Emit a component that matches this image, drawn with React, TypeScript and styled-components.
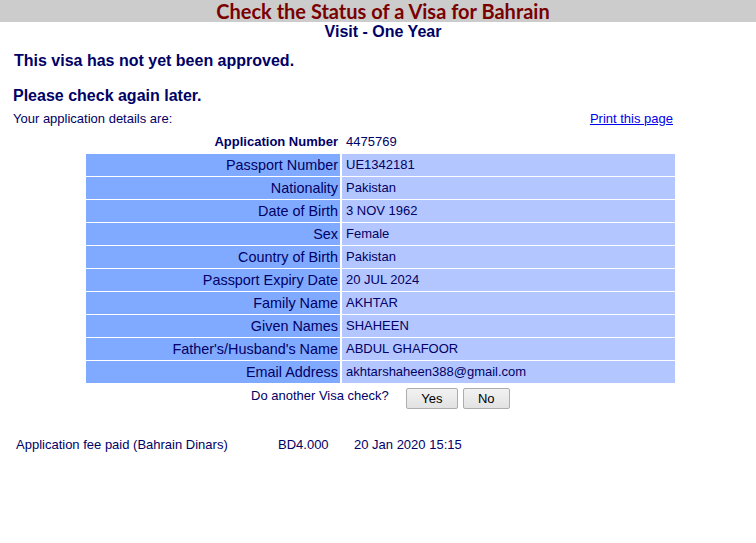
import React from "react";
import styled, { createGlobalStyle } from "styled-components";

const Global = createGlobalStyle`
  html, body { margin: 0; padding: 0; background: #fff; }
  body { font-family: "Liberation Sans", Arial, sans-serif; color: #000066; }
`;

const Page = styled.div`
  width: 756px;
  display: flex;
  flex-direction: column;
`;

const TitleBar = styled.div`
  height: 22px;
  background: #cccccc;
  display: flex;
  align-items: center;
  justify-content: center;
  padding-left: 10px;
  font-family: "Lato", "DejaVu Sans", sans-serif;
  font-weight: 700;
  font-size: 20px;
  color: #7a0000;
  line-height: 22px;
`;

const SubTitle = styled.div`
  text-align: center;
  padding-left: 10px;
  font-weight: 700;
  font-size: 16px;
  line-height: 18px;
  margin-top: 1px;
  color: #000066;
`;

const Message = styled.div<{ $top: number; $left: number }>`
  font-weight: 700;
  font-size: 16px;
  line-height: 18px;
  margin-top: ${(p) => p.$top}px;
  padding-left: ${(p) => p.$left}px;
  color: #000066;
`;

const IntroRow = styled.div`
  display: flex;
  justify-content: space-between;
  align-items: baseline;
  padding: 0 83px 0 13px;
  margin-top: 6px;
  font-size: 13px;
  line-height: 15px;
`;

const PrintLink = styled.a`
  color: #0000ee;
  text-decoration: underline;
  font-size: 13px;
  cursor: pointer;
`;

const Details = styled.div`
  margin: 5px 0 0 86px;
  width: 589px;
  display: grid;
  grid-template-columns: 254px 1fr;
  gap: 1px 2px;
  font-size: 13px;
`;

const Label = styled.div<{ $plain?: boolean }>`
  height: 22px;
  line-height: 22px;
  text-align: right;
  padding-right: 2px;
  background: ${(p) => (p.$plain ? "transparent" : "#80aaff")};
  font-weight: ${(p) => (p.$plain ? 700 : 400)};
  font-size: ${(p) => (p.$plain ? "13px" : "14.4px")};
  color: #000066;
  white-space: nowrap;
`;

const Value = styled.div<{ $plain?: boolean }>`
  height: 22px;
  line-height: 22px;
  padding-left: 4px;
  background: ${(p) => (p.$plain ? "transparent" : "#b4c6ff")};
  color: #000066;
  white-space: nowrap;
`;

const AgainRow = styled.div`
  display: flex;
  align-items: center;
  margin: 5px 0 0 251px;
  font-size: 13px;
  color: #000066;
`;

const AgainText = styled.span`
  margin-top: -6px;
  margin-right: 17px;
`;

const Button = styled.button<{ $w: number }>`
  width: ${(p) => p.$w}px;
  height: 21px;
  margin-right: 5px;
  padding: 0;
  border: 1px solid #adadad;
  border-radius: 2px;
  background: linear-gradient(#f2f2f2, #e2e2e2);
  font-family: "Liberation Sans", Arial, sans-serif;
  font-size: 13px;
  color: #000;
`;

const FeeRow = styled.div`
  display: grid;
  grid-template-columns: 262px 76px auto;
  margin: 28px 0 0 16px;
  font-size: 13px;
  line-height: 15px;
  color: #000066;
`;

const rows: [string, string][] = [
  ["Passport Number", "UE1342181"],
  ["Nationality", "Pakistan"],
  ["Date of Birth", "3 NOV 1962"],
  ["Sex", "Female"],
  ["Country of Birth", "Pakistan"],
  ["Passport Expiry Date", "20 JUL 2024"],
  ["Family Name", "AKHTAR"],
  ["Given Names", "SHAHEEN"],
  ["Father's/Husband's Name", "ABDUL GHAFOOR"],
  ["Email Address", "akhtarshaheen388@gmail.com"],
];

export default function App() {
  return (
    <Page>
      <Global />
      <TitleBar>Check the Status of a Visa for Bahrain</TitleBar>
      <SubTitle>Visit - One Year</SubTitle>
      <Message $top={11} $left={14}>This visa has not yet been approved.</Message>
      <Message $top={17} $left={13}>Please check again later.</Message>
      <IntroRow>
        <span>Your application details are:</span>
        <PrintLink>Print this page</PrintLink>
      </IntroRow>
      <Details>
        <Label $plain>Application Number</Label>
        <Value $plain>4475769</Value>
        {rows.map(([l, v]) => (
          <React.Fragment key={l}>
            <Label>{l}</Label>
            <Value>{v}</Value>
          </React.Fragment>
        ))}
      </Details>
      <AgainRow>
        <AgainText>Do another Visa check?</AgainText>
        <Button $w={52}>Yes</Button>
        <Button $w={47}>No</Button>
      </AgainRow>
      <FeeRow>
        <span>Application fee paid (Bahrain Dinars)</span>
        <span>BD4.000</span>
        <span>20 Jan 2020 15:15</span>
      </FeeRow>
    </Page>
  );
}
